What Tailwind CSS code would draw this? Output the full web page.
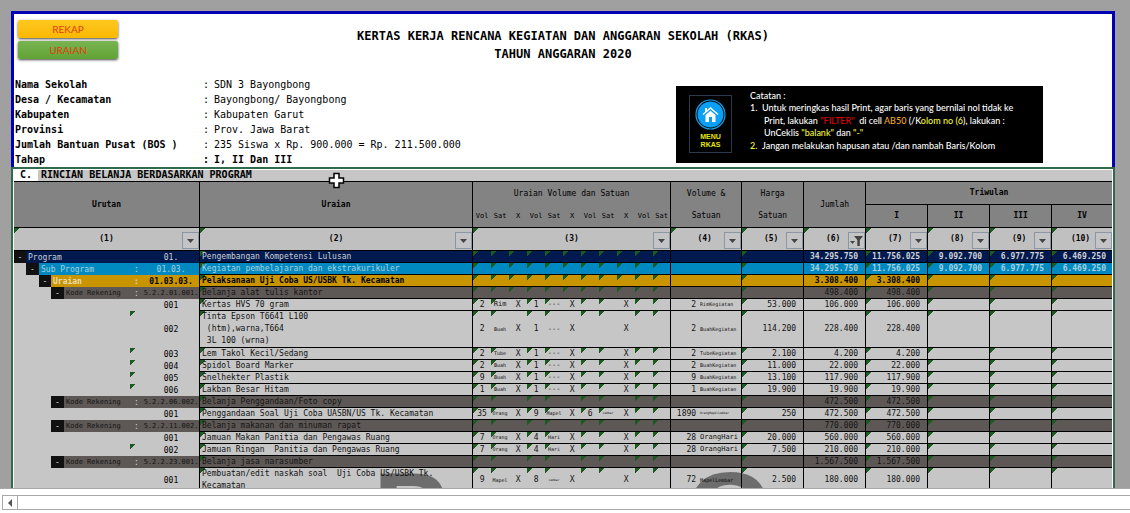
<!DOCTYPE html>
<html lang="id">
<head>
<meta charset="utf-8">
<title>RKAS 2020</title>
<script src="https://cdn.jsdelivr.net/npm/@tailwindcss/browser@4"></script>
</head>
<body class="flex h-screen flex-col overflow-hidden bg-white font-['DejaVu_Sans_Mono',monospace] text-[8px] text-black">
<main class="relative min-h-0 flex-1 overflow-hidden bg-[#a0a0a0] pt-[11px] pr-[15px] pl-[11px]">
  <header class="border-3 border-b-0 border-[#0000b4] bg-white pt-[6px]">
    <div class="flex justify-between px-1">
      <div class="flex w-[100px] flex-col gap-[3px] font-[Lato,sans-serif] text-[10px] text-[#e03c10]">
        <button class="h-[18px] rounded-xs bg-linear-to-b from-[#ffc81e] to-[#f8b800] shadow-sm shadow-black/60">REKAP</button>
        <button class="h-[18px] rounded-xs bg-linear-to-b from-[#78b450] to-[#62a335] shadow-sm shadow-black/60">URAIAN</button>
      </div>
      <h1 class="pt-[7px] text-center text-[12px] leading-[18px] font-bold">KERTAS KERJA RENCANA KEGIATAN DAN ANGGARAN SEKOLAH (RKAS)<br>TAHUN ANGGARAN 2020</h1>
      <div class="w-[100px]"></div>
    </div>
    <div class="mt-[14px] flex items-start justify-between">
      <dl class="grid grid-cols-[188px_11px_auto] pl-px text-[10px] leading-[15px] whitespace-pre">
        <dt class="font-bold">Nama Sekolah</dt><dd>:</dd><dd>SDN 3 Bayongbong</dd>
        <dt class="font-bold">Desa / Kecamatan</dt><dd>:</dd><dd>Bayongbong/ Bayongbong</dd>
        <dt class="font-bold">Kabupaten</dt><dd>:</dd><dd>Kabupaten Garut</dd>
        <dt class="font-bold">Provinsi</dt><dd>:</dd><dd>Prov. Jawa Barat</dd>
        <dt class="font-bold">Jumlah Bantuan Pusat (BOS )</dt><dd>:</dd><dd>235 Siswa x Rp. 900.000 = Rp. 211.500.000</dd>
        <dt class="font-bold">Tahap</dt><dd class="font-bold">:</dd><dd class="font-bold">I, II Dan III</dd>
      </dl>
      <aside class="mt-[9px] mr-[69px] flex h-[77px] w-[367px] items-start bg-black pl-[13px] text-white">
        <a href="#menu" class="mt-[9px] flex h-[58px] w-[43px] flex-col items-center border border-[#2c3a50] pt-[3px] font-['Liberation_Sans',sans-serif] text-[7px] leading-[8px] font-bold text-[#e8e800]">
          <svg class="mb-[3px] size-[31px]" viewBox="0 0 31 31" aria-hidden="true">
            <circle cx="15.500" cy="15.500" r="14.500" fill="none" stroke="#1ba0ea" stroke-width="1.200"/>
            <circle cx="15.500" cy="15.500" r="13" fill="#0aa0f5"/>
            <path d="M8 15.500 15.500 9l7.500 6.500" fill="none" stroke="#fff" stroke-width="1.500"/>
            <path d="M10 9h2v3l-2 1.500z" fill="#fff"/>
            <path d="M10.500 16 15.500 11.700l5 4.300v7h-3.500v-5h-3v5h-3.500z" fill="#fff"/>
          </svg>
          <span class="text-center">MENU<br>RKAS</span>
        </a>
        <div class="pt-1 pl-[18px] font-[Lato,sans-serif] text-[9px] leading-[12px] font-medium whitespace-nowrap">
          <p>Catatan :</p>
          <ol>
            <li class="flex"><span class="w-3">1.</span><span>Untuk meringkas hasil Print, agar baris yang bernilai nol tidak ke</span></li>
            <li class="pt-px pl-[14px]">Print, lakukan <span class="text-[#e00000]">"FILTER"</span>&nbsp; di cell <span class="text-[#f0a820]">AB50</span> (/K<span class="text-[#f4f440]">olom no (6</span>), lakukan :</li>
            <li class="pl-[14px]">UnCeklis <span class="text-[#f4f440]">"balank"</span> dan <span class="text-[#f4f440]">"-"</span></li>
            <li class="flex pt-px"><span class="w-3 text-[#f4f440]">2.</span><span>Jangan melakukan hapusan atau /dan nambah Baris/Kolom</span></li>
          </ol>
        </div>
      </aside>
    </div>
  </header>
  <section class="border-2 border-[#2f6b4c] bg-[#c6c6c6]">
    <div class="border border-b-0 border-white">
      <h2 class="flex h-[12px] border-b border-black text-[10px] leading-[10px] font-bold"><span class="w-[24px] bg-white pl-[6px]">C.</span><span class="pl-[3px]">RINCIAN BELANJA BERDASARKAN PROGRAM</span></h2>
      <table class="w-full table-fixed border-separate border-spacing-0">
        <colgroup>
          <col class="w-[12px]"><col class="w-[13px]"><col class="w-[12px]"><col class="w-[13px]"><col class="w-[66px]"><col class="w-[13px]"><col class="w-[57px]">
          <col class="w-[273px]">
          <col class="w-[18px]"><col class="w-[18px]"><col class="w-[18px]"><col class="w-[18px]"><col class="w-[18px]"><col class="w-[18px]"><col class="w-[18px]"><col class="w-[18px]"><col class="w-[18px]"><col class="w-[18px]"><col class="w-[18px]">
          <col class="w-[71px]"><col class="w-[62px]"><col class="w-[62px]"><col class="w-[62px]"><col class="w-[62px]"><col class="w-[62px]"><col>
        </colgroup>
        <thead id="head" class="bg-[#838383]"></thead>
        <tbody id="rows"></tbody>
      </table>
    </div>
  </section>
  <svg class="absolute top-[172px] left-[328px] size-[17px]" viewBox="0 0 17 17" aria-hidden="true"><path d="M6 1.500h5v4.500h4.500v5h-4.500v4.500h-5v-4.500h-4.500v-5h4.500z" fill="#fff" stroke="#000" stroke-width="1.500"/></svg>
  <div class="pointer-events-none absolute top-[456px] left-[373px] flex w-[400px] justify-between font-['Liberation_Sans',sans-serif] text-[112px] leading-[112px] font-bold text-black/45" aria-hidden="true"><span>P</span><span>G</span></div>
</main>
<footer class="h-[25px] border-t border-[#a8a8a8] bg-white pt-[6px] pl-[2px]">
  <div class="flex h-[15px] border border-r-0 border-[#a8a8a8]">
    <button aria-label="Gulir ke kiri" class="flex w-[15px] items-center justify-center border-r border-[#a8a8a8]"><svg class="h-2 w-1" viewBox="0 0 4 8"><path d="M4 0v8L0 4z" fill="#555"/></svg></button>
  </div>
</footer>
<script>
const TICK = 'bg-[linear-gradient(135deg,#1c5a20_4px,transparent_4px)] bg-no-repeat';
const LINE = 'border-r border-b border-black';
const arrow = '<svg class="h-1 w-[7px]" viewBox="0 0 7 4"><path d="M0 0h7L3.500 4z" fill="#444"/></svg>';
const funnel = '<svg class="size-[13px]" viewBox="0 0 13 13"><path d="M4 2h9L9.800 6v6h-2.500V6z" fill="#444"/><path d="M0 7h5L2.500 10z" fill="#444"/></svg>';

// Column headings
const sub = ['Vol','Sat','X','Vol','Sat','X','Vol','Sat','X','Vol','Sat'];
const th = (t, span, cls) => `<th ${span} class="p-0 ${cls}">${t}</th>`;
let head = '<tr class="h-[23px]">'
  + th('Urutan', 'colspan="7" rowspan="2"', LINE) + th('Uraian', 'rowspan="2"', LINE)
  + th('Uraian Volume dan Satuan', 'colspan="11"', 'border-r border-black font-normal')
  + th('Volume &amp;', '', 'border-r border-black font-normal') + th('Harga', '', 'border-r border-black font-normal')
  + th('Jumlah', 'rowspan="2"', LINE + ' font-normal') + th('Triwulan', 'colspan="4"', 'border-b border-black') + '</tr><tr class="h-[23px]">'
  + sub.map((s, i) => th(s, '', i === 10 ? LINE + ' text-[7px] font-normal' : 'border-b border-black text-[7px] font-normal')).join('')
  + th('Satuan', '', LINE + ' font-normal') + th('Satuan', '', LINE + ' font-normal')
  + ['I','II','III','IV'].map((s, i) => th(s, '', i === 3 ? 'border-b border-black' : LINE)).join('') + '</tr><tr class="h-[23px] bg-[#c0c0c0]">';
for (let n = 1; n <= 10; n++) {
  const span = n === 1 ? 'colspan="7"' : n === 3 ? 'colspan="11"' : '';
  const wide = n <= 3;
  head += th(`<div class="flex h-[22px] items-center ${wide ? 'pl-[17px]' : 'pl-[14px]'}"><span class="flex-1 text-center">(${n})</span><button aria-label="Filter kolom ${n}" class="mt-[3px] flex size-[17px] shrink-0 items-center justify-center border border-[#8d96a3] bg-[#c4c4c6]">${n === 6 ? funnel : arrow}</button></div>`,
    span, (n === 10 ? 'border-b border-black ' : LINE + ' ') + TICK);
}
document.getElementById('head').innerHTML = head + '</tr>';

// kind, code, description, volume cells, total volume, unit, price, amount, quarters
const B = ['2','Buah','X','1','---','X','','','X','',''];
const data = [
  ['p','01.','Pengembangan Kompetensi Lulusan',[],'','','','34.295.750',['11.756.025','9.092.700','6.977.775','6.469.250']],
  ['s','01.03.','Kegiatan pembelajaran dan ekstrakurikuler',[],'','','','34.295.750',['11.756.025','9.092.700','6.977.775','6.469.250']],
  ['u','01.03.03.','Pelaksanaan Uji Coba US/USBK Tk. Kecamatan',[],'','','','3.308.400',['3.308.400']],
  ['k','5.2.2.01.001.','Belanja alat tulis kantor',[],'','','','498.400',['498.400'],1],
  ['d','001','Kertas HVS 70 gram',['2','Rim','X','1','---','X','','','X','',''],'2','RimKegiatan','53.000','106.000',['106.000']],
  ['d','002','Tinta Epson T6641 L100\n (htm),warna,T664\n 3L 100 (wrna)',B,'2','BuahKegiatan','114.200','228.400',['228.400']],
  ['d','003','Lem Takol Kecil/Sedang',['2','Tube','X','1','---','X','','','X','',''],'2','TubeKegiatan','2.100','4.200',['4.200']],
  ['d','004','Spidol Board Marker',B,'2','BuahKegiatan','11.000','22.000',['22.000']],
  ['d','005','Snelhekter Plastik',['9','Buah','X','1','---','X','','','X','',''],'9','BuahKegiatan','13.100','117.900',['117.900']],
  ['d','006','Lakban Besar Hitam',['1','Buah','X','1','---','X','','','X','',''],'1','BuahKegiatan','19.900','19.900',['19.900']],
  ['k','5.2.2.06.002.','Belanja Penggandaan/Foto copy',[],'','','','472.500',['472.500']],
  ['d','001','Penggandaan Soal Uji Coba UASBN/US Tk. Kecamatan',['35','Orang','X','9','Mapel','X','6','Lembar','X','',''],'1890','OrangMapelLembar','250','472.500',['472.500']],
  ['k','5.2.2.11.002.','Belanja makanan dan minuman rapat',[],'','','','770.000',['770.000']],
  ['d','001','Jamuan Makan Panitia dan Pengawas Ruang',['7','Orang','X','4','Hari','X','','','X','',''],'28','OrangHari','20.000','560.000',['560.000']],
  ['d','002','Jamuan Ringan  Panitia dan Pengawas Ruang',['7','Orang','X','4','Hari','X','','','X','',''],'28','OrangHari','7.500','210.000',['210.000']],
  ['k','5.2.2.23.001.','Belanja jasa narasumber',[],'','','','1.567.500',['1.567.500']],
  ['d','001','Pembuatan/edit naskah soal  Uji Coba US/USBK Tk.\nKecamatan',['9','Mapel','X','8','Lembar','X','','','X','',''],'72','MapelLembar','2.500','180.000',['180.000']]
];
const look = {
  p: 'bg-[#001a50] text-[#d0d0d0]', s: 'bg-[#0089c0] text-[#a8d0dc]', u: 'bg-[#c89400] text-black font-bold',
  k: 'bg-[#5d5856] text-[#161414]', d: 'text-[#111]'
};
const level = { p: 0, s: 1, u: 2, k: 3 };
const label = { p: 'Program', s: 'Sub Program', u: '<span class="text-[#e8dcb8]">Uraian</span>', k: 'Kode Rekening' };
const unitSize = { 3: 'text-[7px]', 4: 'text-[5px]', 5: 'text-[5px]', 6: 'text-[3px]' };
const td = (t, cls, span = 1) => `<td colspan="${span}" class="p-0 ${cls}">${t}</td>`;

document.getElementById('rows').innerHTML = data.map(([k, code, desc, vol, qty, unit, price, sum, q, first]) => {
  const c = look[k];
  const bold = k === 'p' || k === 's' ? 'font-bold' : '';
  let r = '';
  if (k === 'd') {
    r += td('', '', 5) + td('', code === '001' ? '' : TICK) + td(code, 'border-r border-black text-center');
  } else {
    const n = level[k];
    if (n) r += td('', '', n);
    r += td('-', 'bg-[#111] text-center text-[#ddd]');
    r += td(label[k], c + (k === 'k' ? ' pl-[2px] text-[7px]' : ' pl-[2px]'), 5 - n - 1);
    r += td(k === 'p' ? '' : '<span class="text-[#d0d0d0]">:</span>', c + ' text-center');
    r += td(code, c + ' border-r border-black text-center' + (k === 'k' ? ' text-[7px]' : ''));
  }
  r += td(desc, `${c} ${LINE} ${TICK} pl-[2px] whitespace-pre`);
  const all = k === 'p' || k === 's' || k === 'u' || first;
  for (let i = 0; i < 11; i++) {
    const v = vol[i] || '';
    const size = i % 3 === 1 && v ? unitSize[v.length] : 'text-[8px]';
    r += td(v, `${c} ${i === 10 ? LINE : 'border-b border-black'} ${all || i % 3 !== 2 ? TICK : ''} text-center ${size}`);
  }
  const us = unit.length < 10 ? 'text-[7px]' : unit.length > 12 ? 'text-[3px]' : 'text-[5px]';
  r += td(qty ? `<div class="flex items-center gap-1"><span class="w-[25px] text-right">${qty}</span><span class="${us}">${unit}</span></div>` : '', `${c} ${LINE}`);
  r += td(price, `${c} ${LINE} ${TICK} pr-[7px] text-right`);
  r += td(sum, `${c} ${LINE} ${bold} pr-[7px] text-right`);
  for (let i = 0; i < 4; i++) r += td(q[i] || '', `${c} ${i === 3 ? 'border-b border-black pr-[6px]' : LINE + ' pr-[7px]'} ${TICK} ${bold} text-right`);
  return `<tr class="h-[12px] ${desc.includes('\n') ? 'leading-[12px]' : 'leading-[11px]'}">${r}</tr>`;
}).join('');
</script>
</body>
</html>
